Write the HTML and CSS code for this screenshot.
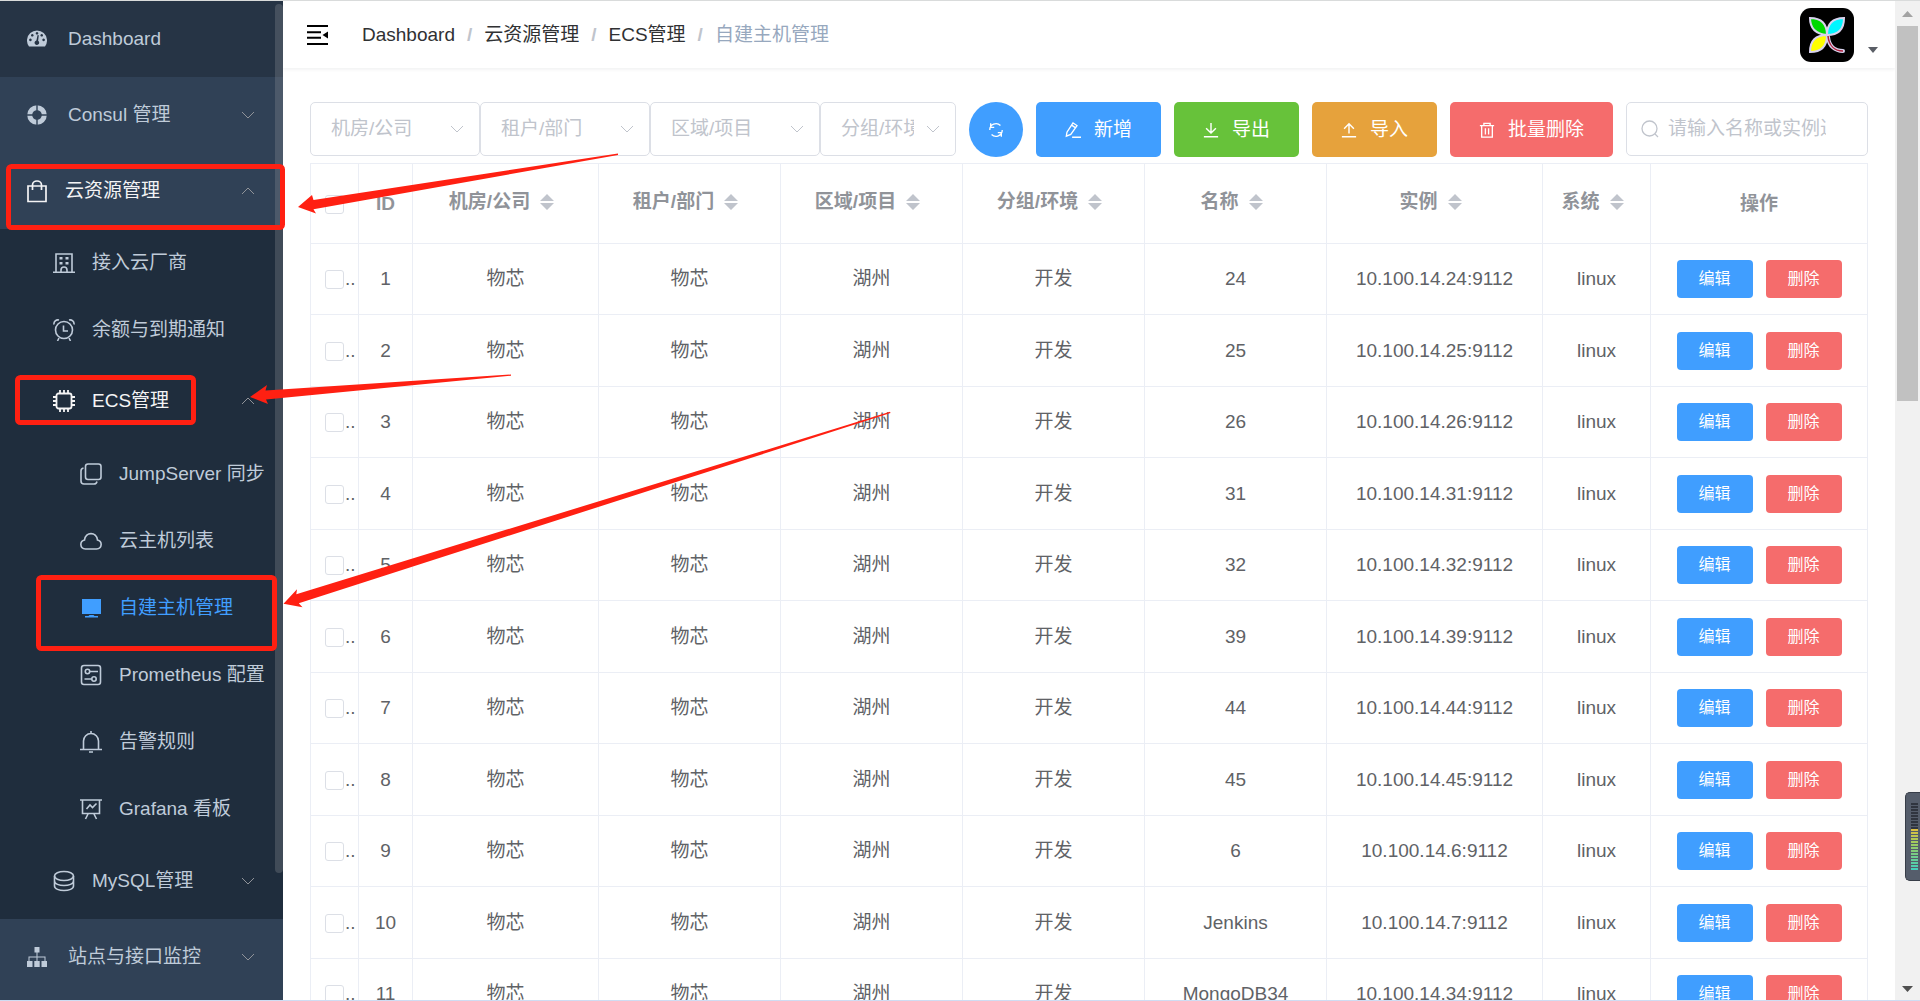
FILE: index.html
```html
<!DOCTYPE html>
<html lang="zh-CN">
<head>
<meta charset="utf-8">
<title>自建主机管理</title>
<link rel="stylesheet" href="styles.css">
</head>
<body>
<svg class="sprite" aria-hidden="true">
  <symbol id="down" viewBox="0 0 14 14"><path d="M1 4l6 6 6-6" fill="none" stroke="currentColor"/></symbol>
  <symbol id="up" viewBox="0 0 14 14"><path d="M1 10l6-6 6 6" fill="none" stroke="currentColor"/></symbol>
  <symbol id="sort" viewBox="0 0 14 16"><path d="M0 7l7-7 7 7zM0 9h14l-7 7z" fill="currentColor"/></symbol>
</svg>
<div class="app">
  <nav class="sidebar">
    <a class="item item-home" href="#"><svg class="icon icon-sm" viewBox="0 0 20 20"><path fill="currentColor" fill-rule="evenodd" d="M2 17.500A10 10 0 1 1 18 17.500zM10 3a1.300 1.300 0 1 0 .01 0zM5.300 5a1.300 1.300 0 1 0 .01 0zM14.700 5a1.300 1.300 0 1 0 .01 0zM3.400 9.600a1.300 1.300 0 1 0 .01 0zM16.600 9.600a1.300 1.300 0 1 0 .01 0zM10.600 6l-1.200 5.400a2.300 2.300 0 1 0 1.700.300L11.800 6.300z"/></svg><span>Dashboard</span></a>
    <button class="item"><svg class="icon icon-sm" viewBox="0 0 20 20"><circle cx="10" cy="10" r="7.300" fill="none" stroke="currentColor" stroke-width="5"/><path d="M10 0v20M0 10h20" stroke="#304156" stroke-width="1.400"/></svg><span>Consul 管理</span><svg class="arrow"><use href="#down"/></svg></button>
    <button class="item open item-bag"><svg class="icon icon-bag" viewBox="0 0 20 23"><path d="M1 6h18v15.500H1zM5.500 10V5a4.500 4 0 0 1 9 0v5" fill="none" stroke="currentColor" stroke-width="1.700"/></svg><span>云资源管理</span><svg class="arrow"><use href="#up"/></svg></button>
    <div class="submenu">
      <a class="item sub" href="#"><svg class="icon" viewBox="0 0 22 22"><path d="M3 20V2h16v18M0 20.300h22M8 20v-2a3 3 0 0 1 6 0v2" fill="none" stroke="currentColor" stroke-width="1.600"/><path d="M6.500 5h3v2.500h-3zM12.500 5h3v2.500h-3zM6.500 10h3v2.500h-3zM12.500 10h3v2.500h-3z" fill="currentColor"/></svg><span>接入云厂商</span></a>
      <a class="item sub" href="#"><svg class="icon" viewBox="0 0 22 22"><g fill="none" stroke="currentColor" stroke-width="1.600"><circle cx="11" cy="11" r="8.500"/><path d="M10.500 6.500V12H15M1 5.500A4 4 0 0 1 6 1M21 5.500A4 4 0 0 0 16 1M6 19l-1.500 3M16 19l1.500 3"/></g></svg><span>余额与到期通知</span></a>
      <button class="item sub open"><svg class="icon" viewBox="0 0 22 22"><g fill="none" stroke="currentColor" stroke-width="1.800"><rect x="3.500" y="3.500" width="15" height="15" rx="2"/><path d="M7 0v3M11 0v3M15 0v3M7 19v3M11 19v3M15 19v3M0 7h3M0 11h3M0 15h3M19 7h3M19 11h3M19 15h3"/></g></svg><span>ECS管理</span><svg class="arrow"><use href="#up"/></svg></button>
      <div class="nested">
        <a class="item leaf" href="#"><svg class="icon" viewBox="0 0 22 22"><g fill="none" stroke="currentColor" stroke-width="1.600"><rect x="5.500" y="1" width="15.500" height="15.500" rx="2.500"/><path d="M3.500 5Q1 5.500 1 8v10q0 3 3 3h10q2.500 0 3-2.500"/></g></svg><span>JumpServer 同步</span></a>
        <a class="item leaf" href="#"><svg class="icon" viewBox="0 0 22 22"><path d="M5.500 19C-.500 18.500-.500 11 4.500 10 5.500 1.500 16.500 1.500 17.500 10c5 1 5 8.500-1 9z" fill="none" stroke="currentColor" stroke-width="1.600"/></svg><span>云主机列表</span></a>
        <a class="item leaf active" href="#"><svg class="icon" viewBox="0 0 22 22"><path d="M2 2h19v15H2zM5 19h3.500l1-1h4l1 1H18v1.500H5z" fill="currentColor"/></svg><span>自建主机管理</span></a>
        <a class="item leaf" href="#"><svg class="icon" viewBox="0 0 22 22"><g fill="none" stroke="currentColor" stroke-width="1.600"><rect x="1.500" y="1.500" width="19" height="19" rx="2.500"/><circle cx="7.500" cy="7.500" r="2.200"/><path d="M10 7.500h8M4.500 15h7"/><circle cx="14" cy="15" r="2.200"/></g></svg><span>Prometheus 配置</span></a>
        <a class="item leaf" href="#"><svg class="icon" viewBox="0 0 22 22"><path d="M0 18.500h22M3.500 18.500V10a7.500 7.500 0 0 1 15 0v8.500M11 0v3M9 21h4" fill="none" stroke="currentColor" stroke-width="1.600"/></svg><span>告警规则</span></a>
        <a class="item leaf" href="#"><svg class="icon" viewBox="0 0 22 22"><path d="M0 2h22M2.500 2v13.500h17V2M6.500 11l3.500-4 2.500 2.500 4-4M8 16l-2.500 5M14 16l2.500 5" fill="none" stroke="currentColor" stroke-width="1.600"/></svg><span>Grafana 看板</span></a>
      </div>
      <button class="item sub"><svg class="icon" viewBox="0 0 22 22"><g fill="none" stroke="currentColor" stroke-width="1.600"><ellipse cx="11" cy="6" rx="9.500" ry="4.500"/><path d="M1.500 6v10c0 6 19 6 19 0V6M1.500 11c0 6 19 6 19 0"/></g></svg><span>MySQL管理</span><svg class="arrow"><use href="#down"/></svg></button>
    </div>
    <button class="item"><svg class="icon icon-sm" viewBox="0 0 20 20"><path d="M7.500 0h5v5.500h-5zM0 14h5.500v6H0zM7.300 14h5.400v6H7.300zM14.500 14H20v6h-5.500zM9.500 5h1v4.500h8V14h-1v-3.500h-7V14h-1v-3.500h-7V14h-1V9.500h8z" fill="currentColor"/></svg><span>站点与接口监控</span><svg class="arrow"><use href="#down"/></svg></button>
    <div class="side-scroll"></div>
  </nav>

  <div class="page">
    <header class="topbar">
      <button class="fold" aria-label="折叠菜单"><svg viewBox="0 0 22 20"><path d="M0 1h21M0 7.300h14M0 12.700h14M0 19h21" stroke="#000" stroke-width="2"/><path d="M21 6.500v7L15.500 10z"/></svg></button>
      <div class="crumbs"><a href="#">Dashboard</a><b>/</b><a href="#">云资源管理</a><b>/</b><a href="#">ECS管理</a><b>/</b><span>自建主机管理</span></div>
      <button class="user" aria-label="用户菜单">
        <svg class="logo" viewBox="0 0 54 54"><rect width="54" height="54" rx="11"/><g stroke="#d9d3ee" stroke-width="2"><path d="M10 10c12 0 17 6 17 17-12-1-17-7-17-17z" fill="#00d800"/><path d="M44 10c0 12-6 17-17 17 0-12 6-17 17-17z" fill="#00f6ff"/><path d="M27 27c0 11-6 17-17 17 0-11 6-17 17-17z" fill="#ff0"/></g><path d="M28 29c1 9 7 14 15 14" fill="none" stroke="#d9d3ee" stroke-width="4" stroke-linecap="round"/><path d="M28 28c1 10 7 15 15 15" fill="none" stroke="#b0203c" stroke-width="1.500"/></svg>
        <svg class="caret" viewBox="0 0 10 6"><path d="M0 0h10L5 6z" fill="#5a5e66"/></svg>
      </button>
    </header>
    <main class="content">
      <div class="filters">
        <div class="selects">
          <label class="pick"><select aria-label="机房/公司"><option>机房/公司</option></select><svg><use href="#down"/></svg></label>
          <label class="pick"><select aria-label="租户/部门"><option>租户/部门</option></select><svg><use href="#down"/></svg></label>
          <label class="pick"><select aria-label="区域/项目"><option>区域/项目</option></select><svg><use href="#down"/></svg></label>
          <label class="pick pick-narrow"><select aria-label="分组/环境"><option>分组/环境</option></select><svg><use href="#down"/></svg></label>
        </div>
        <button class="btn round" aria-label="刷新"><svg viewBox="0 0 18 18"><path d="M2 9a7 7 0 0 1 12-5M16 9a7 7 0 0 1-12 5M3 1.500V6h4M15 16.500V12h-4" fill="none" stroke="currentColor" stroke-width="1.500"/></svg></button>
        <button class="btn"><svg viewBox="0 0 18 18"><path d="M1.500 16l.700-4.500L9 1l4.500 3L6.500 14zM7.500 3.500l4 2.800M8 17.200h10" fill="none" stroke="currentColor" stroke-width="1.500"/></svg><span>新增</span></button>
        <button class="btn green"><svg viewBox="0 0 18 18"><path d="M9 1v11M3.500 7L9 12.500 14.500 7M1 16.500h16" fill="none" stroke="currentColor" stroke-width="1.600"/></svg><span>导出</span></button>
        <button class="btn orange"><svg viewBox="0 0 18 18"><path d="M9 13V2M3.500 7.500L9 2l5.500 5.500M1 16.500h16" fill="none" stroke="currentColor" stroke-width="1.600"/></svg><span>导入</span></button>
        <button class="btn red wide"><svg viewBox="0 0 18 18"><path d="M1 4h16M3 4v13h12V4M5.500 4V1.500h7V4M7.200 7v7M10.800 7v7" fill="none" stroke="currentColor" stroke-width="1.500"/></svg><span>批量删除</span></button>
        <label class="search"><svg viewBox="0 0 18 18"><circle cx="8.500" cy="8.500" r="7.500" fill="none" stroke="currentColor" stroke-width="1.300"/><path d="M14 14l3 3" stroke="currentColor" stroke-width="1.300"/></svg><input type="text" aria-label="搜索" placeholder="请输入名称或实例进行筛选"></label>
      </div>
      <table class="hosts">
        <colgroup><col class="c-check"><col class="c-id"><col class="c-room"><col class="c-mid"><col class="c-mid"><col class="c-mid"><col class="c-mid"><col class="c-inst"><col class="c-sys"><col class="c-op"></colgroup>
        <thead><tr>
          <th class="check"><input type="checkbox" aria-label="全选"></th><th>ID</th>
          <th><button class="sort">机房/公司<svg><use href="#sort"/></svg></button></th>
          <th><button class="sort">租户/部门<svg><use href="#sort"/></svg></button></th>
          <th><button class="sort">区域/项目<svg><use href="#sort"/></svg></button></th>
          <th><button class="sort">分组/环境<svg><use href="#sort"/></svg></button></th>
          <th><button class="sort">名称<svg><use href="#sort"/></svg></button></th>
          <th><button class="sort">实例<svg><use href="#sort"/></svg></button></th>
          <th><button class="sort">系统<svg><use href="#sort"/></svg></button></th>
          <th>操作</th>
        </tr></thead>
        <tbody>
          <tr><td class="check"><input type="checkbox" aria-label="选择 1"><span>..</span></td><td>1</td><td>物芯</td><td>物芯</td><td>湖州</td><td>开发</td><td>24</td><td>10.100.14.24:9112</td><td>linux</td><td><div class="ops"><button>编辑</button><button class="red">删除</button></div></td></tr>
          <tr><td class="check"><input type="checkbox" aria-label="选择 2"><span>..</span></td><td>2</td><td>物芯</td><td>物芯</td><td>湖州</td><td>开发</td><td>25</td><td>10.100.14.25:9112</td><td>linux</td><td><div class="ops"><button>编辑</button><button class="red">删除</button></div></td></tr>
          <tr><td class="check"><input type="checkbox" aria-label="选择 3"><span>..</span></td><td>3</td><td>物芯</td><td>物芯</td><td>湖州</td><td>开发</td><td>26</td><td>10.100.14.26:9112</td><td>linux</td><td><div class="ops"><button>编辑</button><button class="red">删除</button></div></td></tr>
          <tr><td class="check"><input type="checkbox" aria-label="选择 4"><span>..</span></td><td>4</td><td>物芯</td><td>物芯</td><td>湖州</td><td>开发</td><td>31</td><td>10.100.14.31:9112</td><td>linux</td><td><div class="ops"><button>编辑</button><button class="red">删除</button></div></td></tr>
          <tr><td class="check"><input type="checkbox" aria-label="选择 5"><span>..</span></td><td>5</td><td>物芯</td><td>物芯</td><td>湖州</td><td>开发</td><td>32</td><td>10.100.14.32:9112</td><td>linux</td><td><div class="ops"><button>编辑</button><button class="red">删除</button></div></td></tr>
          <tr><td class="check"><input type="checkbox" aria-label="选择 6"><span>..</span></td><td>6</td><td>物芯</td><td>物芯</td><td>湖州</td><td>开发</td><td>39</td><td>10.100.14.39:9112</td><td>linux</td><td><div class="ops"><button>编辑</button><button class="red">删除</button></div></td></tr>
          <tr><td class="check"><input type="checkbox" aria-label="选择 7"><span>..</span></td><td>7</td><td>物芯</td><td>物芯</td><td>湖州</td><td>开发</td><td>44</td><td>10.100.14.44:9112</td><td>linux</td><td><div class="ops"><button>编辑</button><button class="red">删除</button></div></td></tr>
          <tr><td class="check"><input type="checkbox" aria-label="选择 8"><span>..</span></td><td>8</td><td>物芯</td><td>物芯</td><td>湖州</td><td>开发</td><td>45</td><td>10.100.14.45:9112</td><td>linux</td><td><div class="ops"><button>编辑</button><button class="red">删除</button></div></td></tr>
          <tr><td class="check"><input type="checkbox" aria-label="选择 9"><span>..</span></td><td>9</td><td>物芯</td><td>物芯</td><td>湖州</td><td>开发</td><td>6</td><td>10.100.14.6:9112</td><td>linux</td><td><div class="ops"><button>编辑</button><button class="red">删除</button></div></td></tr>
          <tr><td class="check"><input type="checkbox" aria-label="选择 10"><span>..</span></td><td>10</td><td>物芯</td><td>物芯</td><td>湖州</td><td>开发</td><td>Jenkins</td><td>10.100.14.7:9112</td><td>linux</td><td><div class="ops"><button>编辑</button><button class="red">删除</button></div></td></tr>
          <tr><td class="check"><input type="checkbox" aria-label="选择 11"><span>..</span></td><td>11</td><td>物芯</td><td>物芯</td><td>湖州</td><td>开发</td><td>MongoDB34</td><td>10.100.14.34:9112</td><td>linux</td><td><div class="ops"><button>编辑</button><button class="red">删除</button></div></td></tr>
        </tbody>
      </table>
    </main>
  </div>

  <div class="scrollbar">
    <svg viewBox="0 0 11 6"><path d="M0 6h11L5.500 0z" fill="#a3a3a3"/></svg>
    <div class="thumb"></div>
    <svg viewBox="0 0 11 6"><path d="M0 0h11L5.500 6z" fill="#505050"/></svg>
  </div>
  <div class="meter"><i class="off"></i><i class="on"></i></div>

  <svg class="marks" width="900" height="660" aria-hidden="true">
    <g fill="none" stroke="#ff2012" stroke-width="5"><rect x="8.500" y="166.500" width="274" height="61" rx="3"/><rect x="17.500" y="377.500" width="176" height="45" rx="3"/><rect x="38.500" y="577.500" width="236" height="71" rx="3"/></g>
    <g fill="#ff2012"><path d="M298 207l14-12 1.500 5L618 153.500v1.500L313.500 209.300l2.500 4.200z"/><path d="M250 397l17-12-1.500 5.500L511 374.500v1.200L266 399.500l2 4.500z"/><path d="M283.500 603.700L297 589.300l-.700 5L890 411.800l.500 1.200L298.800 603.300l3.700 4z"/></g>
  </svg>
</div>
</body>
</html>
```
FILE: styles.css
```css
* { box-sizing: border-box; }
body {
  margin: 0;
  font: 19px/26px "Liberation Sans", Arial, "Noto Sans CJK SC", sans-serif;
  color: #606266;
  background: #fff;
}
button, input, select { font: inherit; color: inherit; }
button { border: 0; padding: 0; background: none; cursor: pointer; }
a { color: inherit; text-decoration: none; }
.sprite { position: absolute; width: 0; height: 0; }

.app {
  position: relative;
  display: grid;
  grid-template-columns: 283px minmax(0, 1fr) 25px;
  height: 100vh;
  overflow: hidden;
  border-top: 1px solid #d9dbdb;
  border-bottom: 1px solid #cfdcf2;
}

/* sidebar */
.sidebar { position: relative; background: #304156; color: #bfcbd9; overflow: hidden; }
.item {
  display: flex;
  align-items: center;
  width: 100%;
  height: 76px;
  padding: 0 28px 0 27px;
  text-align: left;
  white-space: nowrap;
}
.item-home { background: #263445; }
.icon { width: 22px; height: 22px; margin-right: 17px; flex: none; }
.icon-sm { width: 20px; height: 20px; margin-right: 21px; }
.icon-bag { width: 20px; height: 23px; margin-right: 18px; }
.arrow { width: 14px; height: 14px; margin-left: auto; color: #909399; }
.open { color: #f4f4f5; }
.submenu { background: #1f2d3d; }
.sub { padding-left: 53px; }
a.sub, .leaf { height: 67px; }
.leaf { padding-left: 80px; padding-right: 8px; }
.nested { padding: 1px 0; }
.active { color: #409eff; }
.side-scroll {
  position: absolute;
  top: 3px;
  right: 0;
  width: 8px;
  height: 87%;
  border-radius: 4px;
  background: rgba(144, 147, 153, .3);
}

/* top bar */
.page { overflow: hidden; }
.topbar {
  display: flex;
  align-items: center;
  height: 67px;
  padding: 0 17px 0 24px;
  box-shadow: 0 1px 4px rgba(0, 21, 41, .08);
}
.fold { display: flex; margin-right: 33px; }
.fold svg { width: 22px; height: 20px; }
.crumbs { display: flex; color: #303133; white-space: nowrap; }
.crumbs b { margin: 0 12px; color: #c0c4cc; }
.crumbs span { color: #97a8be; }
.user { display: flex; align-items: flex-end; gap: 14px; margin-left: auto; }
.logo { width: 54px; height: 54px; }
.caret { width: 10px; height: 6px; margin-bottom: 9px; }

/* filters */
.content { padding: 34px 27px 0; }
.filters { display: flex; gap: 13px; margin-bottom: 6px; white-space: nowrap; }
.selects { display: flex; flex: 0 1 646px; min-width: 0; }
.pick { position: relative; flex: 170 1 0; min-width: 0; color: #c0c4cc; }
.pick-narrow { flex-grow: 136; }
.pick select, .search input {
  width: 100%;
  height: 54px;
  border: 1px solid #dcdfe6;
  border-radius: 5px;
  background: #fff;
  appearance: none;
  outline: 0;
}
.pick select { padding: 0 41px 0 20px; text-overflow: clip; }
.pick svg { position: absolute; top: 20px; right: 16px; width: 14px; height: 14px; pointer-events: none; }
.btn {
  display: flex;
  align-items: center;
  justify-content: center;
  gap: 13px;
  width: 125px;
  height: 55px;
  flex: none;
  border-radius: 5px;
  color: #fff;
  background: #409eff;
}
.btn svg { width: 16px; height: 18px; }
.btn.round { width: 54px; border-radius: 50%; }
.btn.green { background: #67c23a; }
.btn.orange { background: #e6a23c; }
.btn.wide { width: 163px; }
.red, .btn.red { background: #f56c6c; }
.search { position: relative; flex: 1 1 0; min-width: 0; color: #c0c4cc; }
.search svg { position: absolute; top: 18px; left: 15px; width: 18px; height: 18px; }
.search input { padding: 0 41px; }
.search input::placeholder { color: #c0c4cc; opacity: 1; }

/* table */
.hosts { width: 100%; table-layout: fixed; border-collapse: collapse; text-align: center; white-space: nowrap; }
.c-check { width: 48px; }
.c-id { width: 54px; }
.c-room { width: 186px; }
.c-mid { width: 182px; }
.c-inst { width: 216px; }
.c-sys { width: 108px; }
.c-op { width: 217px; }
.hosts th, .hosts td { padding: 0; border: 1px solid #ebeef5; overflow: hidden; }
.hosts th { height: 80px; color: #909399; font-weight: bold; }
.hosts td { height: 71px; }
.hosts tr:nth-child(even) td { height: 72px; }
.hosts .check { padding-left: 14px; text-align: left; }
.check input {
  width: 19px;
  height: 19px;
  margin: 0 1px 0 0;
  border: 1px solid #dcdfe6;
  border-radius: 3px;
  appearance: none;
  vertical-align: middle;
  background: #fff;
}
.sort { display: inline-flex; align-items: center; gap: 10px; padding: 0 8px 4px 0; }
.sort svg { width: 14px; height: 16px; color: #c0c4cc; }
.ops { display: flex; justify-content: center; gap: 13px; font-size: 16px; }
.ops button { width: 76px; height: 38px; border-radius: 4px; color: #fff; background: #409eff; }
.ops .red { background: #f56c6c; }

/* window scrollbar */
.scrollbar {
  display: flex;
  flex-direction: column;
  align-items: center;
  gap: 9px;
  padding: 10px 0 8px;
  background: #f1f1f1;
}
.scrollbar svg { width: 11px; height: 6px; }
.thumb { width: 21px; height: 375px; margin-bottom: auto; background: #c1c1c1; }

/* level meter docked over the window edge */
.meter {
  position: absolute;
  right: 0;
  top: 791px;
  width: 15px;
  height: 89px;
  padding: 10px 2px 10px 5px;
  border: 1px solid #373d48;
  border-right: 0;
  border-radius: 5px 0 0 5px;
  background: #555d6b;
}
.meter i { display: block; }
.meter .off { height: 26px; background: repeating-linear-gradient(#30353f 0 2px, #555d6b 2px 3px); }
.meter .on { height: 42px; background: repeating-linear-gradient(transparent 0 2px, #555d6b 2px 3px), linear-gradient(#e0c040, #9ccc60 35%, #40d0c0); }

.marks { position: absolute; left: 0; top: -1px; pointer-events: none; }
```
